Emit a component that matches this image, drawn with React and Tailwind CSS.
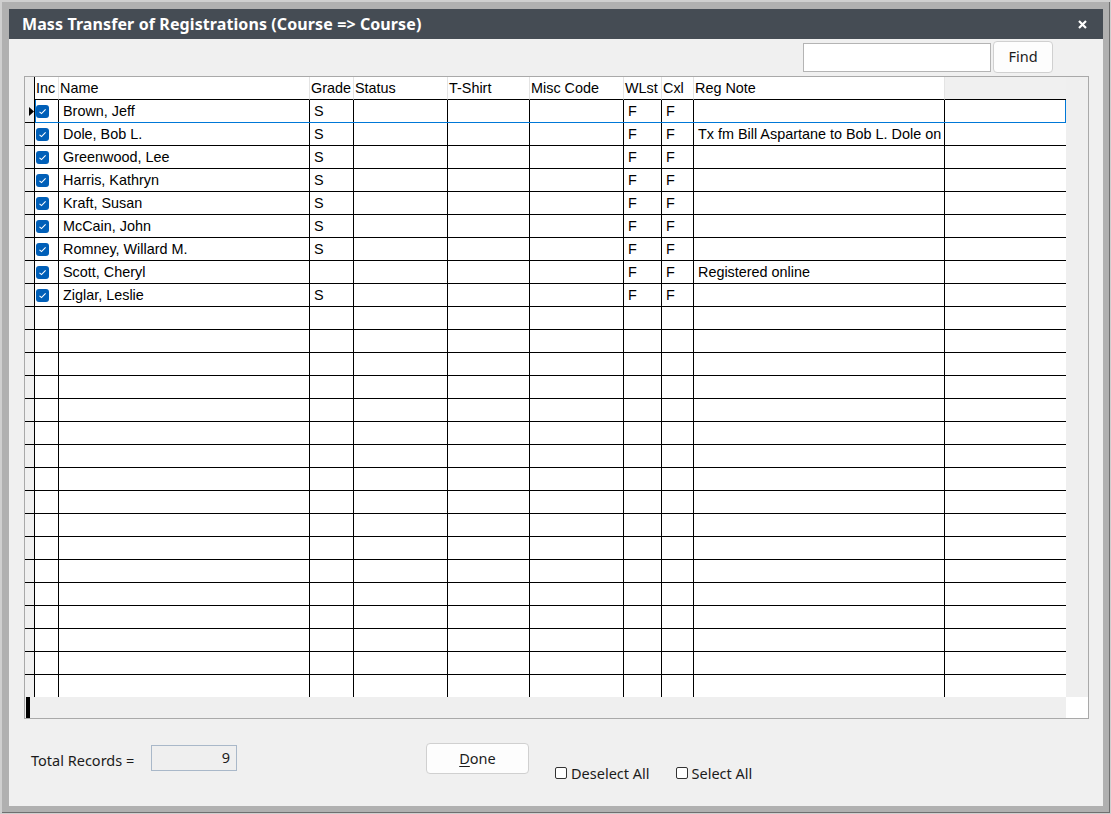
import React from "react";

const columns = [
  { key: "inc", label: "Inc", w: "w-[24px]" },
  { key: "name", label: "Name", w: "w-[251px]" },
  { key: "grade", label: "Grade", w: "w-[44px]" },
  { key: "status", label: "Status", w: "w-[94px]" },
  { key: "tshirt", label: "T-Shirt", w: "w-[82px]" },
  { key: "misc", label: "Misc Code", w: "w-[94px]" },
  { key: "wlst", label: "WLst", w: "w-[38px]" },
  { key: "cxl", label: "Cxl", w: "w-[32px]" },
  { key: "note", label: "Reg Note", w: "w-[251px]" },
];

const registrations = [
  { name: "Brown, Jeff", grade: "S", wlst: "F", cxl: "F", note: "" },
  { name: "Dole, Bob L.", grade: "S", wlst: "F", cxl: "F", note: "Tx fm Bill Aspartane to Bob L. Dole on" },
  { name: "Greenwood, Lee", grade: "S", wlst: "F", cxl: "F", note: "" },
  { name: "Harris, Kathryn", grade: "S", wlst: "F", cxl: "F", note: "" },
  { name: "Kraft, Susan", grade: "S", wlst: "F", cxl: "F", note: "" },
  { name: "McCain, John", grade: "S", wlst: "F", cxl: "F", note: "" },
  { name: "Romney, Willard M.", grade: "S", wlst: "F", cxl: "F", note: "" },
  { name: "Scott, Cheryl", grade: "", wlst: "F", cxl: "F", note: "Registered online" },
  { name: "Ziglar, Leslie", grade: "S", wlst: "F", cxl: "F", note: "" },
];

const TOTAL_ROWS = 26;

function CheckedBox() {
  return (
    <div className="w-[13px] h-[13px] rounded-[3px] bg-[#005fb8] flex items-center justify-center">
      <svg width="9" height="9" viewBox="0 0 9 9" fill="none">
        <path d="M1.5 4.8 L3.5 6.6 L7.6 2.4" stroke="white" strokeWidth="1.1" />
      </svg>
    </div>
  );
}

function GridRow({ row, selected }) {
  return (
    <div className="relative flex h-[23px] border-b border-black shrink-0">
      <div className="w-[10px] shrink-0 h-full border-r border-black bg-[#f0f0f0] flex items-center">
        {selected && (
          <svg width="5" height="9" viewBox="0 0 5 9" className="ml-[4px]">
            <path d="M0 0 L5 4.5 L0 9 Z" fill="black" />
          </svg>
        )}
      </div>
      {columns.map((c) => (
        <div
          key={c.key}
          className={`${c.w} shrink-0 h-full border-r border-black overflow-hidden whitespace-nowrap flex items-center ${
            c.key === "inc" ? "pl-[1px]" : "pl-[4px] pt-[1px]"
          }`}
        >
          {row && c.key === "inc" && <CheckedBox />}
          {row && c.key !== "inc" && row[c.key]}
        </div>
      ))}
      <div className="flex-1 h-full" />
      {selected && (
        <div className="absolute left-[10px] right-0 top-0 bottom-[-1px] border-l border-r border-b border-[#0078d7] pointer-events-none" />
      )}
    </div>
  );
}

export default function App() {
  const rows = Array.from({ length: TOTAL_ROWS }, (_, i) => registrations[i] || null);

  return (
    <div className="w-[1111px] h-[814px] bg-[#cfcfcf] pl-[2px] pt-[2px] pr-[1px] pb-[1px]">
      <div className="w-full h-full bg-[#b0b0b0] border-r border-b border-[#6f6f6f] pl-[7px] pt-[7px] pr-[6px] pb-[6px]">
        <div className="w-full h-full flex flex-col bg-[#f0f0f0] font-['Noto_Sans',sans-serif]">
          {/* Title bar */}
          <div className="h-[30px] shrink-0 bg-[#454c54] flex items-center justify-between pl-[13px] pr-[16px]">
            <span className="text-white font-bold text-[16px] tracking-[0.1px]">
              Mass Transfer of Registrations (Course =&gt; Course)
            </span>
            <svg width="9" height="9" viewBox="0 0 9 9">
              <path d="M1 1 L8 8 M8 1 L1 8" stroke="white" strokeWidth="2.2" />
            </svg>
          </div>

          {/* Find */}
          <div className="flex justify-end items-center pt-[2px] pr-[50px] h-[34px] shrink-0">
            <input className="w-[188px] h-[29px] bg-white border border-[#b4b4b4] outline-none" />
            <button className="ml-[2px] w-[60px] h-[32px] bg-[#fdfdfd] border border-[#d0d0d0] rounded-[4px] text-[14.5px] text-[#1b1b1b]">
              Find
            </button>
          </div>

          {/* Grid */}
          <div className="ml-[15px] mt-[3px] w-[1065px] h-[643px] shrink-0 border border-[#a9a9a9] flex flex-col font-['Liberation_Sans',Arial,sans-serif] text-[14.4px] text-black">
            <div className="flex h-[620px] shrink-0">
              <div className="w-[1041px] h-full overflow-hidden bg-white flex flex-col">
                {/* Header */}
                <div className="flex h-[23px] shrink-0">
                  <div className="w-[10px] shrink-0 h-full border-r border-black bg-[#f0f0f0]" />
                  {columns.map((c) => (
                    <div
                      key={c.key}
                      className={`${c.w} shrink-0 h-full border-b border-b-black border-r border-r-[#e4e4e4] pl-[1px] pt-[1px] flex items-center whitespace-nowrap overflow-hidden`}
                    >
                      {c.label}
                    </div>
                  ))}
                  <div className="flex-1 h-full bg-[#f0f0f0] border-b border-black" />
                </div>
                {rows.map((r, i) => (
                  <GridRow key={i} row={r} selected={i === 0} />
                ))}
              </div>
              <div className="flex-1 h-full bg-[#efefef]" />
            </div>
            <div className="flex flex-1">
              <div className="w-[1041px] h-full bg-[#efefef] pl-[1px]">
                <div className="w-[4px] h-full bg-black" />
              </div>
              <div className="flex-1 h-full bg-white" />
            </div>
          </div>

          {/* Footer */}
          <div className="flex items-start pl-[22px] text-[14.5px] text-[#1b1b1b]">
            <div className="w-[120px] mt-[31px] leading-[20px]">Total Records =</div>
            <div className="w-[86px] h-[26px] mt-[26px] border border-[#a9b8c9] bg-[#efefef] flex items-center justify-end pr-[6px]">
              9
            </div>
            <button className="ml-[189px] mt-[24px] w-[103px] h-[31px] bg-[#fdfdfd] border border-[#d0d0d0] rounded-[4px]">
              <span className="underline underline-offset-2">D</span>one
            </button>
            <label className="ml-[26px] mt-[44px] flex items-center leading-[20px]">
              <span className="w-[12px] h-[12px] rounded-[2px] border border-[#333] bg-white mr-[4px]" />
              Deselect All
            </label>
            <label className="ml-[26px] mt-[44px] flex items-center leading-[20px]">
              <span className="w-[12px] h-[12px] rounded-[2px] border border-[#333] bg-white mr-[4px]" />
              Select All
            </label>
          </div>
        </div>
      </div>
    </div>
  );
}
